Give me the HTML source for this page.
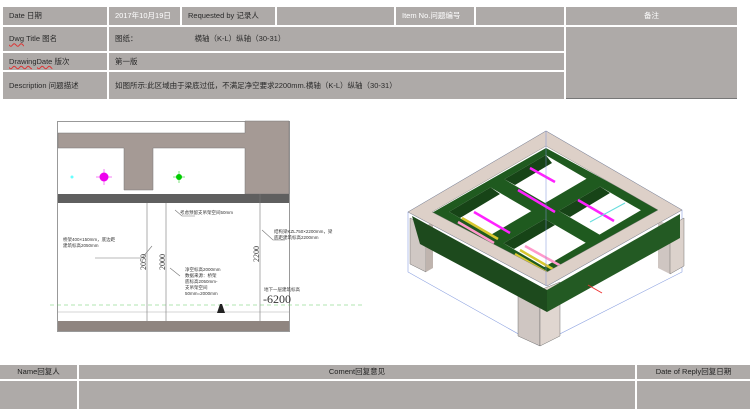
<!DOCTYPE html>
<html><head><meta charset="utf-8"><style>
body{margin:0;width:750px;height:409px;background:#fff;position:relative;overflow:hidden;font-family:"Liberation Sans","Noto Sans CJK SC",sans-serif;}
.c{position:absolute;background:#aeaaa8;color:#2a2a2a;font-size:7.5px;line-height:1;display:flex;align-items:center;box-sizing:border-box;padding-left:6px;white-space:nowrap}
.w{color:#fff}
.ctr{justify-content:center;padding-left:0}
</style></head><body>
<div class="c" style="left:3px;top:7px;width:104px;height:18px">Date 日期</div>
<div class="c w" style="left:109px;top:7px;width:71px;height:18px">2017年10月19日</div>
<div class="c" style="left:182px;top:7px;width:93px;height:18px">Requested by 记录人</div>
<div class="c" style="left:277px;top:7px;width:117px;height:18px"></div>
<div class="c w" style="left:396px;top:7px;width:78px;height:18px">Item No.问题编号</div>
<div class="c" style="left:476px;top:7px;width:88px;height:18px"></div>
<div class="c w ctr" style="left:566px;top:7px;width:171px;height:18px">备注</div>
<div class="c" style="left:3px;top:27px;width:104px;height:24px"><span style="text-decoration:underline wavy #d33;text-decoration-thickness:0.5px">Dwg</span>&nbsp;Title 图名</div>
<div class="c" style="left:109px;top:27px;width:455px;height:24px">图纸：<span style="margin-left:57px">横轴（K-L）纵轴（30-31）</span></div>
<div class="c" style="left:3px;top:53px;width:104px;height:17px"><span style="text-decoration:underline wavy #d33;text-decoration-thickness:0.5px">DrawingDate</span>&nbsp;版次</div>
<div class="c" style="left:109px;top:53px;width:455px;height:17px">第一版</div>
<div class="c" style="left:3px;top:72px;width:104px;height:27px">Description 问题描述</div>
<div class="c" style="left:109px;top:72px;width:455px;height:27px">如图所示:此区域由于梁底过低，不满足净空要求2200mm.横轴（K-L）纵轴（30-31）</div>
<div class="c" style="left:566px;top:27px;width:171px;height:72px;border-bottom:1px solid #777"></div>
<div class="c ctr" style="left:0;top:365px;width:77px;height:14px;color:#222">Name回复人</div>
<div class="c ctr" style="left:79px;top:365px;width:556px;height:14px;color:#222">Coment回复意见</div>
<div class="c ctr" style="left:637px;top:365px;width:113px;height:14px;color:#222">Date of Reply回复日期</div>
<div class="c" style="left:0;top:381px;width:77px;height:28px"></div>
<div class="c" style="left:79px;top:381px;width:556px;height:28px"></div>
<div class="c" style="left:637px;top:381px;width:113px;height:28px"></div>

<svg width="750" height="409" style="position:absolute;left:0;top:0" xmlns="http://www.w3.org/2000/svg">
<rect x="57.5" y="121.5" width="232" height="210" fill="#fff" stroke="#999"/>
<path d="M58 133 H245 V121 H289 V194 H245 V148 H153 V190 H124 V148 H58 Z" fill="#a59a95" stroke="#777" stroke-width="0.5"/>
<rect x="58" y="194" width="231" height="9" fill="#5f5f5f"/>
<rect x="58" y="321" width="231" height="10" fill="#8f8580"/>
<line x1="58" y1="312" x2="289" y2="312" stroke="#aaa" stroke-width="0.6"/>
<line x1="50" y1="305" x2="365" y2="305" stroke="#6c6" stroke-width="0.6" stroke-dasharray="4 3"/>
<circle cx="72" cy="177" r="1.5" fill="#6ff"/>
<circle cx="104" cy="177" r="4.5" fill="#e0e"/><path d="M96 177h16M104 169v16" stroke="#e0e" stroke-width="0.5"/>
<circle cx="179" cy="177" r="3" fill="#0c0"/><path d="M173 177h12M179 171v12" stroke="#0c0" stroke-width="0.5"/>
<g stroke="#777" stroke-width="0.6" fill="none">
<line x1="147" y1="203" x2="147" y2="321"/><line x1="166" y1="203" x2="166" y2="321"/><line x1="260" y1="194" x2="260" y2="321"/>
<path d="M152 246 L142 258 H95"/><path d="M170 268 L180 276"/><path d="M175 210 L182 216 H195"/><path d="M262 230 L273 240 H285"/>
</g>
<g font-family="Liberation Serif,Noto Serif CJK SC,serif" fill="#333">
<text x="0" y="0" font-size="8" transform="translate(146 270) rotate(-90)">2050</text>
<text x="0" y="0" font-size="8" transform="translate(165 270) rotate(-90)">2000</text>
<text x="0" y="0" font-size="8" transform="translate(259 262) rotate(-90)">2200</text>
<text x="263" y="303" font-size="12">-6200</text>
</g>
<g font-size="4.5" fill="#333" font-family="Liberation Sans,Noto Sans CJK SC,sans-serif">
<text x="180" y="214">考虑预留支吊架空间50mm</text>
<text x="63" y="241">桥架400×150mm，底边距</text><text x="63" y="247">建筑标高2050mm</text>
<text x="185" y="271">净空标高2000mm</text><text x="185" y="277">数据来源：桥架</text><text x="185" y="283">底标高2050mm-</text><text x="185" y="289">支吊架空间</text><text x="185" y="295">50mm=2000mm</text>
<text x="274" y="233">结构梁KZL750×2200mm，梁</text><text x="274" y="239">底距建筑标高2200mm</text>
<text x="264" y="291">地下一层建筑标高</text>
</g>
<path d="M217 313 l3 -9 h2 l3 9z" fill="#222"/>
<!-- 3D model -->
<g>
<path d="M408 212 L546 131 L682 210 L547 286 Z" fill="none" stroke="#8aa0e0" stroke-width="0.6"/>
<path d="M408 212 V272 L538 345 L682 272 V210" fill="none" stroke="#8aa0e0" stroke-width="0.6"/>
<path d="M410 218 L426 226 V272 L410 264 Z" fill="#d0c8c4" stroke="#555" stroke-width="0.4"/>
<path d="M426 226 L433 222 V268 L426 272Z" fill="#bfb4ae"/>
<path d="M518 280 L540 290 V346 L518 336 Z" fill="#cfc6c2" stroke="#555" stroke-width="0.4"/>
<path d="M540 290 L560 282 V336 L540 346Z" fill="#e0d6d0" stroke="#555" stroke-width="0.4"/>
<path d="M658 220 L670 226 V274 L658 268Z" fill="#cfc6c2"/>
<path d="M670 226 L684 218 V266 L670 274Z" fill="#dcd2cc" stroke="#555" stroke-width="0.4"/>
<path d="M412 216 L547 290 V312 L420 244 Z" fill="#1d4a1d"/>
<path d="M547 290 L680 214 V238 L547 312 Z" fill="#235a23"/>
<path d="M430 214 L546 148 L664 212 L547 279 Z" fill="#1f5a1f"/>
<!-- panels -->
<path d="M545.7 155 L504.3 179.3 L545.1 203 L586.5 178.7Z" fill="#fff"/>
<path d="M490.5 187.4 L449.1 211.7 L489.9 235.4 L531.3 211.1Z" fill="#fff"/>
<path d="M600.1 186.6 L558.7 210.9 L599.5 234.6 L640.9 210.3Z" fill="#fff"/>
<path d="M544.9 219 L503.5 243.3 L544.3 267 L585.7 242.7Z" fill="#fff"/>
<!-- green depth inside panels -->
<path d="M545.7 155 L504.3 179.3 L515 185 L552 163Z" fill="#174417"/>
<path d="M490.5 187.4 L449.1 211.7 L460 218 L500 194Z" fill="#174417"/>
<path d="M600.1 186.6 L558.7 210.9 L570 217 L610 193Z" fill="#174417"/>
<path d="M544.9 219 L503.5 243.3 L514 249 L555 225Z" fill="#174417"/>
<!-- pipes -->
<g stroke-width="2.5">
<path d="M518 190 L555 212" stroke="#f2f"/>
<path d="M462 218 L498 239" stroke="#d8c830"/>
<path d="M458 222 L494 243" stroke="#f9c"/>
<path d="M474 212 L510 233" stroke="#f2f"/>
<path d="M520 250 L556 271" stroke="#d8c830"/>
<path d="M515 254 L551 275" stroke="#d8c830"/>
<path d="M525 246 L561 266" stroke="#f9c"/>
<path d="M510 258 L546 279" stroke="#e22"/>
<path d="M578 200 L614 221" stroke="#f2f"/>
<path d="M590 222 L625 203" stroke="#6dd" stroke-width="1"/>
<path d="M530 168 L555 182" stroke="#f2f"/>
</g>
<path d="M408 212 L546 131 L682 210 L547 286 Z M432 212 L546 146 L658 210 L547 272 Z" fill="#ddd0c8" fill-rule="evenodd" stroke="#777" stroke-width="0.4"/>
<path d="M546 131 V286" stroke="#7a90d8" stroke-width="0.5"/>
<path d="M588 285 l14 8" stroke="#e33" stroke-width="1"/>
</g>
</svg>
</body></html>
